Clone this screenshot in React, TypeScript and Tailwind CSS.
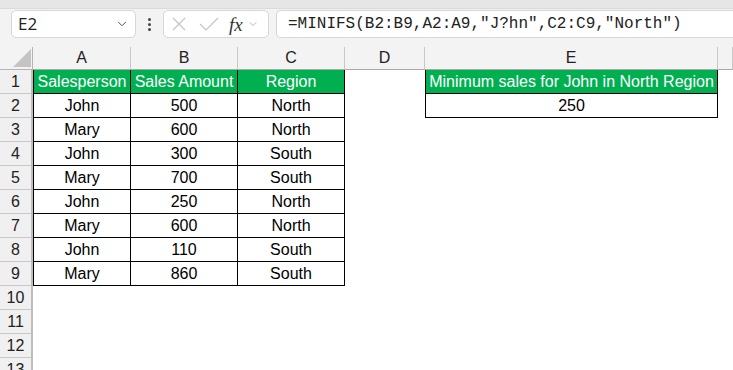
import { ChevronDown } from "lucide-react"

const cols = ["A", "B", "C", "D", "E", ""]

const rows: string[][] = [
  ["John", "500", "North"],
  ["Mary", "600", "North"],
  ["John", "300", "South"],
  ["Mary", "700", "South"],
  ["John", "250", "North"],
  ["Mary", "600", "North"],
  ["John", "110", "South"],
  ["Mary", "860", "South"],
]

const cell = "h-6 flex items-center justify-center text-[16px] leading-none text-black"

const App = () => {
  return (
    <div className="w-[733px] h-[370px] overflow-hidden bg-white font-['Liberation_Sans',Arial,sans-serif]">
      {/* toolbar */}
      <div className="h-[9px] bg-[#e6e6e6] border-b border-[#dadada]" />
      <div className="h-[38px] bg-[#f3f3f3] flex items-start pt-[1px] pl-[11px] gap-0">
        <div className="w-[125px] h-[28px] bg-white border border-[#d6d6d6] rounded-[5px] flex items-center justify-between pl-[6px] pr-[6px]">
          <span className="text-[17px] text-[#222] font-['Open_Sans',sans-serif]">E2</span>
          <ChevronDown size={14} strokeWidth={1.6} className="text-[#444]" />
        </div>
        <div className="w-[27px] h-[28px] flex flex-col items-center justify-center gap-[2px]">
          <span className="w-[3px] h-[3px] bg-[#444] rounded-full" />
          <span className="w-[3px] h-[3px] bg-[#444] rounded-full" />
          <span className="w-[3px] h-[3px] bg-[#444] rounded-full" />
        </div>
        <div className="w-[106px] h-[28px] bg-white border border-[#d6d6d6] rounded-[5px] flex items-center pl-[7px]">
          <svg width="16" height="16" viewBox="0 0 16 16" className="mr-[12px]">
            <path d="M2 2L14 14M14 2L2 14" stroke="#c4c4c4" strokeWidth="1.2" fill="none" />
          </svg>
          <svg width="20" height="16" viewBox="0 0 20 16" className="mr-[10px]">
            <path d="M1 8L7 14L19 2" stroke="#c4c4c4" strokeWidth="1.2" fill="none" />
          </svg>
          <span className="font-['Liberation_Serif',serif] italic text-[19px] text-[#333] leading-none mr-[4px]">fx</span>
          <ChevronDown size={12} strokeWidth={1.4} className="text-[#999]" />
        </div>
        <div className="ml-[7px] flex-1 h-[28px] bg-white border border-[#d6d6d6] rounded-l-[5px] border-r-0 flex items-center pl-[11px]">
          <span className="font-['Liberation_Mono',monospace] text-[16px] text-[#222] whitespace-nowrap">
            =MINIFS(B2:B9,A2:A9,"J?hn",C2:C9,"North")
          </span>
        </div>
      </div>

      {/* sheet */}
      <div className="grid grid-cols-[33px_98px_107px_107px_80px_293px_1fr] grid-rows-[23px] auto-rows-[24px] bg-white">
        {/* column headers */}
        <div className="h-[23px] bg-[#f3f3f3] border-r border-b border-[#b4b4b4] relative">
          <div className="absolute right-[1px] bottom-[2px] w-0 h-0 border-l-[18px] border-l-transparent border-b-[18px] border-b-[#c4c4c4]" />
        </div>
        {cols.map((c, i) => (
          <div
            key={i}
            className="h-[23px] bg-[#f3f3f3] border-r border-b border-r-[#c8c8c8] border-b-[#a8a8a8] flex items-center justify-center text-[16px] text-[#222]"
          >
            {c}
          </div>
        ))}

        {Array.from({ length: 13 }).map((_, r) => {
          const n = r + 1
          const rowHead = (
            <div
              key={`h${n}`}
              className="h-6 bg-[#f0f0f0] border-r-2 border-r-[#bdbdbd] border-b border-b-[#c8c8c8] flex items-center justify-center text-[16px] text-[#222]"
            >
              {n}
            </div>
          )
          let abc: React.ReactNode[] = []
          if (n === 1) {
            abc = ["Salesperson", "Sales Amount", "Region"].map((t, i) => (
              <div
                key={`c${n}${i}`}
                className={`${cell} bg-[#00b050] text-white border-b border-r border-black ${i === 0 ? "border-l" : ""}`}
              >
                {t}
              </div>
            ))
          } else if (n <= 9) {
            abc = rows[n - 2].map((t, i) => (
              <div
                key={`c${n}${i}`}
                className={`${cell} border-b border-r border-black ${i === 0 ? "border-l" : ""}`}
              >
                {t}
              </div>
            ))
          } else {
            abc = [0, 1, 2].map((i) => <div key={`c${n}${i}`} className="h-6" />)
          }
          let e: React.ReactNode = <div key={`e${n}`} className="h-6" />
          if (n === 1) {
            e = (
              <div key={`e${n}`} className={`${cell} bg-[#00b050] text-white border-l border-r border-b border-black`}>
                Minimum sales for John in North Region
              </div>
            )
          } else if (n === 2) {
            e = (
              <div key={`e${n}`} className={`${cell} border-l border-r border-b border-black`}>
                250
              </div>
            )
          }
          return [
            rowHead,
            ...abc,
            <div key={`d${n}`} className="h-6" />,
            e,
            <div key={`f${n}`} className="h-6" />,
          ]
        })}
      </div>
    </div>
  )
}

export default App
